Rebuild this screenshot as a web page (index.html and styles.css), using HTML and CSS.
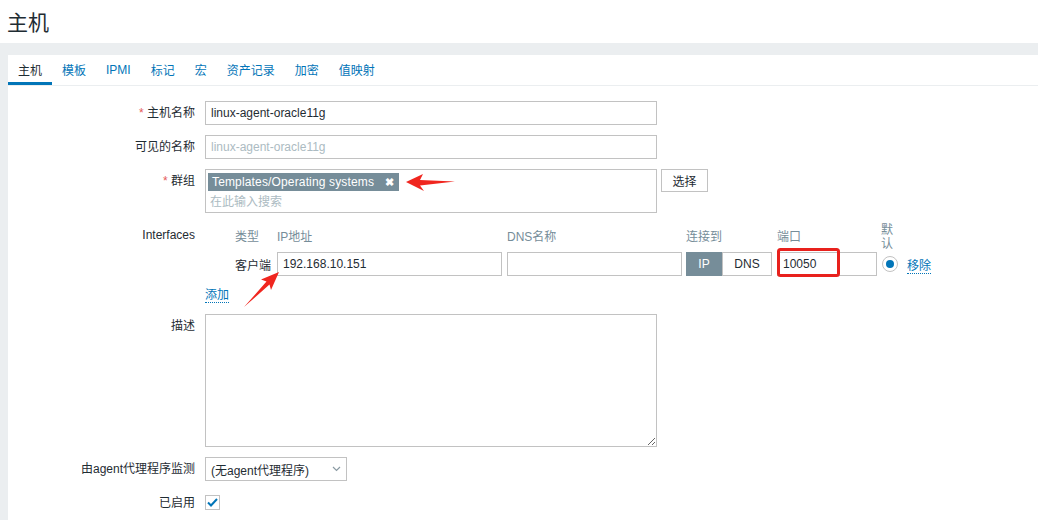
FILE: index.html
```html
<!DOCTYPE html>
<html lang="zh-CN">

<head>
    <meta charset="UTF-8">
    <title>主机</title>
    <link rel="stylesheet" href="styles.css">
</head>

<body>

    <header class="page-header">
        <h1>主机</h1>
    </header>

    <main class="panel">
        <ul class="tabs">
            <li class="active"><a>主机</a></li>
            <li><a>模板</a></li>
            <li><a>IPMI</a></li>
            <li><a>标记</a></li>
            <li><a>宏</a></li>
            <li><a>资产记录</a></li>
            <li><a>加密</a></li>
            <li><a>值映射</a></li>
        </ul>

        <form class="form-list">
            <div class="form-row">
                <label class="form-label"><span class="required">*</span> 主机名称</label>
                <div class="form-field">
                    <input type="text" class="text-input wide" value="linux-agent-oracle11g">
                </div>
            </div>

            <div class="form-row">
                <label class="form-label">可见的名称</label>
                <div class="form-field">
                    <input type="text" class="text-input wide" placeholder="linux-agent-oracle11g">
                </div>
            </div>

            <div class="form-row">
                <label class="form-label"><span class="required">*</span> 群组</label>
                <div class="form-field group-field">
                    <div class="multiselect">
                        <span class="chip">Templates/Operating systems <span class="chip-x">&#10006;</span></span>
                        <span class="ms-placeholder">在此输入搜索</span>
                    </div>
                    <button type="button" class="btn-alt">选择</button>
                </div>
            </div>

            <div class="form-row">
                <div class="form-label">Interfaces</div>
                <div class="form-field">
                    <div class="iface-grid">
                        <div></div>
                        <div class="th">类型</div>
                        <div class="th">IP地址</div>
                        <div class="th">DNS名称</div>
                        <div class="th">连接到</div>
                        <div class="th">端口</div>
                        <div class="th narrow">默认</div>
                        <div></div>

                        <div></div>
                        <div class="td">客户端</div>
                        <div><input type="text" class="text-input ip" value="192.168.10.151"></div>
                        <div><input type="text" class="text-input dns" value=""></div>
                        <div class="toggle">
                            <span class="seg on">IP</span>
                            <span class="seg">DNS</span>
                        </div>
                        <div><input type="text" class="text-input port" value="10050"></div>
                        <div><span class="radio"><span class="radio-dot"></span></span></div>
                        <div><a class="link">移除</a></div>
                    </div>
                    <div class="add-row"><a class="link">添加</a></div>
                </div>
            </div>

            <div class="form-row">
                <label class="form-label">描述</label>
                <div class="form-field">
                    <textarea class="text-area"></textarea>
                </div>
            </div>

            <div class="form-row">
                <label class="form-label">由agent代理程序监测</label>
                <div class="form-field">
                    <div class="select-box">
                        <span>(无agent代理程序)</span>
                        <svg width="9" height="6" viewBox="0 0 9 6"><path d="M1 1 L4.5 4.5 L8 1" fill="none" stroke="#8a9aa3" stroke-width="1.2"/></svg>
                    </div>
                </div>
            </div>

            <div class="form-row">
                <label class="form-label">已启用</label>
                <div class="form-field">
                    <span class="checkbox">
                        <svg width="11" height="9" viewBox="0 0 11 9"><path d="M1 4.5 L4 7.5 L10 1" fill="none" stroke="#0275b8" stroke-width="2"/></svg>
                    </span>
                </div>
            </div>
        </form>
    </main>

    <!-- red annotations drawn over the screenshot -->
    <svg class="annotations" width="1038" height="520" viewBox="0 0 1038 520">
        <polygon points="406,182 423,174 420,180 455,181.5 420,185.5 424,191" fill="#f0261f"/>
        <polygon points="279,272 261,279.5 266.5,281.5 244,307 269.5,284.5 271,290" fill="#f0261f"/>
        <rect x="778.5" y="249.5" width="60" height="26" rx="2" fill="none" stroke="#e8211d" stroke-width="3"/>
    </svg>

</body>

</html>
```

FILE: styles.css
```css
* {
    margin: 0;
    padding: 0;
    box-sizing: border-box;
}

body {
    background-color: #ebeef0;
    font-family: 'Liberation Sans', 'Noto Sans CJK SC', sans-serif;
    font-size: 12px;
    color: #1f2c33;
    width: 1038px;
    height: 520px;
    overflow: hidden;
    position: relative;
}

.page-header {
    background: white;
    height: 43px;
    padding: 0 7px 2px;
    display: flex;
    align-items: center;
}

.page-header h1 {
    font-size: 21px;
    font-weight: normal;
    color: #1f2c33;
}

.panel {
    background: white;
    margin: 12px 0 0 8px;
    height: 465px;
}

.tabs {
    list-style: none;
    display: flex;
    height: 31px;
    border-bottom: 1px solid #ebeef0;
}

.tabs li {
    padding: 0 10px;
    display: flex;
    align-items: center;
    border-bottom: 3px solid transparent;
    padding-top: 2px;
}

.tabs li a {
    color: #0275b8;
}

.tabs li.active {
    border-bottom-color: #0275b8;
}

.tabs li.active a {
    color: #1f2c33;
}

.form-list {
    padding-top: 15px;
}

.form-row {
    display: grid;
    grid-template-columns: 187px 1fr;
    column-gap: 10px;
    margin-bottom: 10px;
}

.form-label {
    text-align: right;
    line-height: 24px;
    white-space: nowrap;
}

.required {
    color: #e45959;
}

.text-input {
    height: 24px;
    border: 1px solid #c2c2c2;
    padding: 0 5px;
    font-family: inherit;
    font-size: 12px;
    color: #1f2c33;
    background: white;
}

.text-input::placeholder {
    color: #acbbc2;
}

.wide {
    width: 452px;
}

.group-field {
    display: flex;
    align-items: flex-start;
    gap: 4px;
}

.multiselect {
    width: 452px;
    height: 44px;
    border: 1px solid #c2c2c2;
    padding: 3px 2px;
    display: flex;
    flex-direction: column;
    align-items: flex-start;
}

.chip {
    background: #768d99;
    color: white;
    height: 18px;
    line-height: 18px;
    padding: 0 5px 0 4px;
    font-size: 12px;
    letter-spacing: 0.15px;
}

.chip-x {
    font-size: 11px;
    margin-left: 7px;
    font-weight: bold;
}

.ms-placeholder {
    color: #acbbc2;
    margin: 3px 0 0 2px;
    line-height: 16px;
}

.btn-alt {
    height: 23px;
    width: 47px;
    background: white;
    border: 1px solid #c2c2c2;
    color: #1f2c33;
    font-family: inherit;
    font-size: 12px;
}

.iface-grid {
    display: grid;
    grid-template-columns: 30px 42px 230px 179px 91px 104px 26px auto;
    grid-template-rows: 28px 24px;
    row-gap: 1px;
    align-items: center;
}

.th {
    color: #768d99;
    line-height: 14px;
}

.th.narrow {
    width: 14px;
}

.ip {
    width: 225px;
}

.dns {
    width: 175px;
}

.port {
    width: 100px;
}

.toggle {
    display: flex;
    height: 24px;
    width: 86px;
}

.seg {
    border: 1px solid #c2c2c2;
    display: flex;
    align-items: center;
    justify-content: center;
    width: 50px;
}

.seg.on {
    background: #768d99;
    border-color: #768d99;
    color: white;
    width: 36px;
}

.radio {
    width: 16px;
    height: 16px;
    border: 1px solid #c2c2c2;
    border-radius: 50%;
    display: flex;
    align-items: center;
    justify-content: center;
    margin-left: 1px;
}

.radio-dot {
    width: 8px;
    height: 8px;
    border-radius: 50%;
    background: #0275b8;
}

.link {
    color: #0275b8;
    border-bottom: 1px dotted #0275b8;
}

.add-row {
    padding-top: 11px;
    line-height: 16px;
    height: 28px;
}

.text-area {
    width: 452px;
    height: 133px;
    border: 1px solid #c2c2c2;
    display: block;
    resize: both;
}

.select-box {
    width: 142px;
    height: 24px;
    border: 1px solid #c2c2c2;
    display: flex;
    align-items: center;
    justify-content: space-between;
    padding: 0 5px 0 5px;
}

.checkbox {
    margin-top: 4px;
    width: 15px;
    height: 15px;
    border: 1px solid #c2c2c2;
    display: flex;
    align-items: center;
    justify-content: center;
}

.annotations {
    position: absolute;
    left: 0;
    top: 0;
    pointer-events: none;
}
```
